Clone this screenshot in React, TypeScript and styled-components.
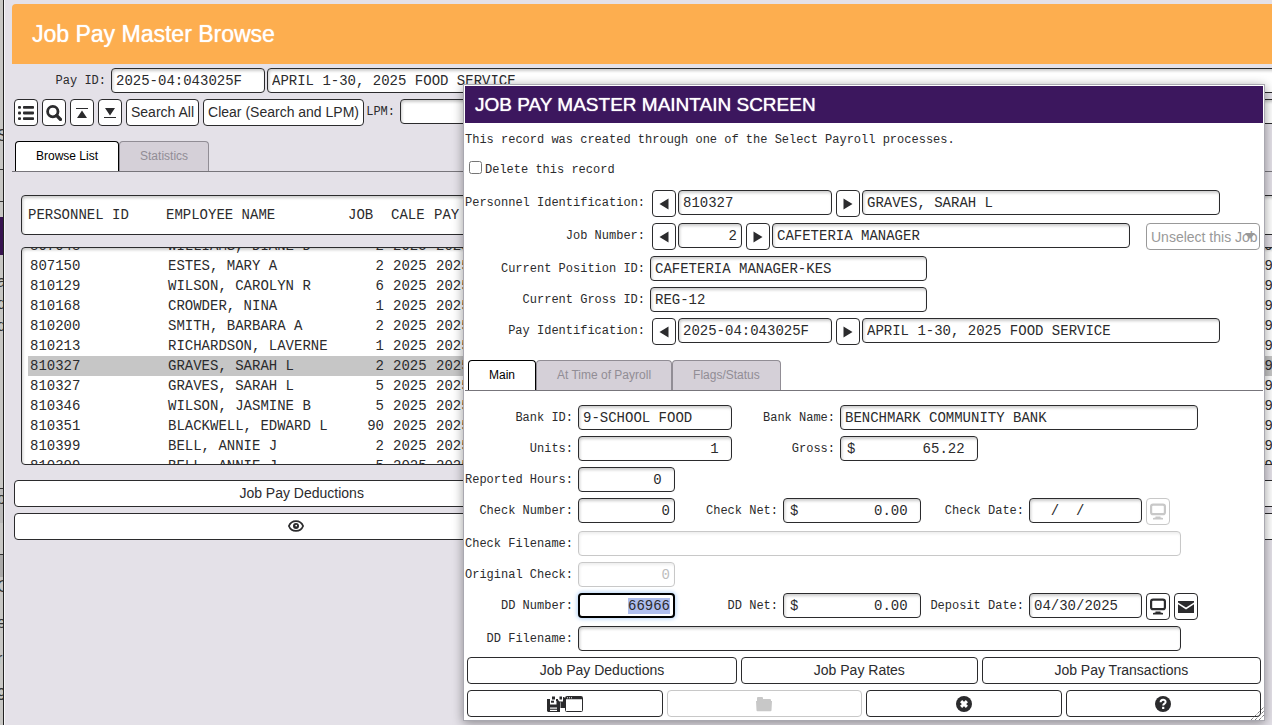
import React, { useEffect, useLayoutEffect, useRef } from 'react';
import styled, { createGlobalStyle, css } from 'styled-components';

const SANS = '"Liberation Sans", Arial, sans-serif';
const MONO = '"Liberation Mono", "Courier New", monospace';
const INK = '#2b2b2d';

const GlobalStyle = createGlobalStyle`
  *, *::before, *::after { box-sizing: border-box; }
  body { margin: 0; background: #e4e1e8; color: ${INK}; font-family: ${SANS}; overflow: hidden; }
  button, input, select { margin: 0; color: inherit; }
`;

/* ---------- page ---------- */

const Screen = styled.div`
  position: relative;
  display: flex;
  height: 100vh;
  overflow: hidden;
`;

const Underlay = styled.div`
  flex: none;
  width: 4px;
  overflow: hidden;
  background: #c8c7c4;
  border-right: 1px solid #222;
  font: 16px/20px ${SANS};
  color: #333;
`;

const Sliver = styled.div<{ $h: number; $tone?: string; $rule?: boolean }>`
  height: ${p => p.$h}px;
  overflow: hidden;
  text-indent: -3px;
  background: ${p => p.$tone || 'transparent'};
  border-bottom: ${p => (p.$rule ? '1px solid #333' : '0')};
`;

const Browse = styled.main`
  flex: none;
  width: calc(100% + 460px);
  background: #e4e1e8;
  border-left: 1px solid #f6f5f8;
  padding: 4px 8px 0 7px;
`;

const BrowseTitle = styled.h1`
  margin: 0;
  padding-left: 20px;
  height: 60px;
  border-radius: 4px 0 0 0;
  background: #fdae4f;
  color: #fff;
  font: 23px/60px ${SANS};
  text-shadow: 0 0 1px #fff;
`;

/* ---------- shared form parts ---------- */

const Row = styled.div<{ $top?: number }>`
  display: flex;
  align-items: flex-start;
  margin-top: ${p => p.$top ?? 6}px;
`;

const Label = styled.label<{ $w?: number }>`
  flex: none;
  width: ${p => (p.$w ? `${p.$w}px` : 'auto')};
  margin-right: 5px;
  padding-top: 1px;
  text-align: right;
  white-space: pre;
  font: 12px/24px ${MONO};
`;

const Field = styled.input<{ $w: number; $right?: boolean }>`
  flex: none;
  width: ${p => p.$w}px;
  height: 25px;
  margin-right: 2px;
  padding: 0 4px;
  border: 1px solid ${INK};
  border-radius: 4px;
  outline: 0;
  background: #fff;
  box-shadow: inset 1px 2px 3px rgba(0, 0, 0, 0.2);
  font: 14px/20px ${MONO};
  text-align: ${p => (p.$right ? 'right' : 'left')};

  &:disabled { border-color: #c8c8c8; color: #bdbdbd; box-shadow: inset 1px 2px 3px rgba(0, 0, 0, 0.07); }
  &:focus {
    border: 2px solid #000;
    padding: 0 3px;
    box-shadow: 0 0 4px 1px #b4d3f7;
  }
  &::selection { background: #afbeee; color: ${INK}; }
`;

const Button = styled.button<{ $icon?: boolean; $grow?: boolean; $even?: boolean }>`
  display: flex;
  align-items: center;
  justify-content: center;
  height: 27px;
  margin: 0 2px;
  padding: 0 4px 2px;
  border: 1px solid ${INK};
  border-radius: 4px;
  background: #fff;
  font: 14px/20px ${SANS};
  white-space: nowrap;
  flex: none;
  ${p => p.$icon && css`width: 24px; padding: 0;`}
  ${p => p.$grow && css`flex: 1 1 auto;`}
  ${p => p.$even && css`flex: 1 1 0; padding: 0;`}
  &:disabled { border-color: #c8c8c8; color: #c8c8c8; }
  svg { display: block; flex: none; }
`;

const Spacer = styled.span`
  flex: none;
  width: 12px;
`;

const TabBar = styled.div<{ $inset: number; $top: number }>`
  display: flex;
  margin-top: ${p => p.$top}px;
  padding-left: ${p => p.$inset}px;
  border-bottom: 1px solid #77757b;
`;

const Tab = styled.button<{ $on?: boolean }>`
  height: 30px;
  padding: 0 20px 2px;
  border: 1px solid ${p => (p.$on ? '#000' : '#918d95')};
  border-bottom: 0;
  border-radius: 4px 4px 0 0;
  background: ${p => (p.$on ? '#fff' : '#d5d0d8')};
  color: ${p => (p.$on ? '#000' : '#918d95')};
  font: 12px/20px ${SANS};
`;

/* ---------- browse list ---------- */

const Panel = styled.section`
  padding: 23px 0 0 9px;
`;

const box = css`
  border: 1px solid ${INK};
  border-radius: 4px;
  background: #fff;
  box-shadow: inset 1px 2px 3px rgba(0, 0, 0, 0.2);
  font: 14px/20px ${MONO};
  overflow: hidden;
`;

const HeadBox = styled.div`
  ${box}
  height: 40px;
  padding: 9px 6px;
`;

const ListBox = styled.div`
  ${box}
  height: 218px;
  margin-top: 12px;
  padding: 0 6px;
`;

const Table = styled.table`
  width: 100%;
  table-layout: fixed;
  border-collapse: collapse;
  th, td { height: 20px; padding: 0; font-weight: 400; text-align: left; white-space: pre; }
  td { padding-left: 2px; }
  td:nth-child(3) { text-align: right; padding-right: 7px; }
  th:nth-child(3) { padding-left: 2px; }
`;

const Line = styled.tr<{ $on?: boolean }>`
  background: ${p => (p.$on ? '#c6c6c6' : 'transparent')};
`;

const Footer = styled.div`
  margin-top: 15px;
`;

const Wide = styled(Button)<{ $part: number }>`
  flex: ${p => p.$part} 1 0;
`;

/* ---------- maintenance window ---------- */

const Dialog = styled.section`
  position: absolute;
  top: 84px;
  left: 463px;
  right: 7px;
  padding: 1px;
  border: 1px solid #a9a8b0;
  background: #fff;
  box-shadow: 0 2px 10px rgba(0, 0, 0, 0.4);
`;

const DialogTitle = styled.h2`
  margin: 0;
  padding-left: 10px;
  height: 37px;
  background: #3c175e;
  color: #fff;
  font: 19px/37px ${SANS};
  text-shadow: 0 0 1px #fff;
`;

const Note = styled.p`
  margin: 5px 0 0;
  font: 12px/24px ${MONO};
`;

const Check = styled.label`
  display: flex;
  align-items: flex-start;
  margin-top: 8px;
  height: 20px;
  padding-left: 4px;
  font: 12px/20px ${MONO};
  input { width: 13px; height: 13px; margin: 1px 3px 0 0; }
`;

const Picker = styled.span`
  position: relative;
  flex: none;
  width: 114px;
  margin: 0 2px;
  color: #999;
  select {
    appearance: none;
    display: block;
    width: 100%;
    height: 27px;
    padding: 0 0 0 4px;
    border: 1px solid #999;
    border-radius: 4px;
    background: #fff;
    font: 14px/20px ${SANS};
    opacity: 1;
    color: #999;
  }
  svg { position: absolute; right: 5px; top: 10px; }
`;

const Body = styled.div`
  padding: 9px 0 2px;
`;

const Grip = styled.svg`
  position: absolute;
  right: 0;
  bottom: 0;
`;

/* ---------- icons ---------- */

const ListIcon = () => (
  <svg width="16" height="16" viewBox="0 0 16 16" fill="currentColor">
    {[1, 6.6, 12.2].map(y => (
      <g key={y}>
        <rect x="0" y={y} width="3" height="2.8" rx="1" />
        <rect x="5" y={y} width="11" height="2.8" rx="0.8" />
      </g>
    ))}
  </svg>
);
const SearchIcon = () => (
  <svg width="16" height="16" viewBox="0 0 16 16" fill="none" stroke="currentColor">
    <circle cx="6.8" cy="6.6" r="5.2" strokeWidth="2.8" />
    <path d="M10.8 10.6l3.6 3.8" strokeWidth="3.4" strokeLinecap="round" />
  </svg>
);
const TopIcon = () => (
  <svg width="12" height="13" viewBox="0 0 12 13" fill="currentColor">
    <path d="M0 2h12v1H0zM6 4.500l5 7.500H1z" />
  </svg>
);
const BottomIcon = () => (
  <svg width="12" height="13" viewBox="0 0 12 13" fill="currentColor">
    <path d="M0 11h12v1H0zM1 2h10L6 9.500z" />
  </svg>
);
const PrevIcon = () => (
  <svg width="10" height="12" viewBox="0 0 10 12" fill="currentColor"><path d="M9.5 0.5v11L0.5 6z" /></svg>
);
const NextIcon = () => (
  <svg width="10" height="12" viewBox="0 0 10 12" fill="currentColor"><path d="M0.5 0.5v11L9.5 6z" /></svg>
);
const EyeIcon = () => (
  <svg width="16" height="12" viewBox="0 0 16 12">
    <path d="M0.9 6C3.500 -0.600 12.500 -0.600 15.100 6C12.500 12.600 3.500 12.600 0.900 6z" fill="none" stroke="currentColor" strokeWidth="1.800" />
    <circle cx="8" cy="6" r="3" fill="currentColor" />
    <circle cx="8.200" cy="5.600" r="0.900" fill="#fff" />
  </svg>
);
const MonitorIcon = () => (
  <svg width="16" height="17" viewBox="0 0 16 17" fill="currentColor">
    <rect x="1.100" y="1.600" width="13.800" height="9.600" rx="2" fill="none" stroke="currentColor" strokeWidth="2.200" />
    <path d="M5.500 13.500h5v1l2.500 .500v1.500H3v-1.500l2.500-.500z" />
  </svg>
);
const MailIcon = () => (
  <svg width="16" height="12" viewBox="0 0 16 12" fill="currentColor">
    <path d="M0 0h16v1.600L8 6.600L0 1.600zM0 3.200l8 5.200l8-5.200V12H0z" />
  </svg>
);
const SaveCloseIcon = () => (
  <svg width="36" height="16" viewBox="0 0 36 16">
    <path d="M9 3h2v2.500h5V1h1l1 1V12H13.500V6.500L12 5H9z" fill={INK} />
    <rect x="12.500" y="0.500" width="2.500" height="3" fill={INK} />
    <path d="M0 3h3v5.500H9.500V4H11L13 6V16H1L0 15z" fill={INK} />
    <rect x="3" y="11.500" width="7" height="3.500" fill="#fff" />
    <rect x="3" y="12.700" width="7" height="1.100" fill={INK} />
    <rect x="5" y="0.500" width="3" height="3" fill={INK} />
    <rect x="4" y="4.700" width="3" height="2" fill={INK} />
    <rect x="18.500" y="0.500" width="17" height="15" rx="1" fill="#fff" stroke={INK} />
    <path d="M19 2h16" stroke={INK} strokeWidth="2.500" />
    <path d="M20 1.800h1m1 0h1m1 0h1" stroke="#fff" strokeWidth="1" />
  </svg>
);
const FolderIcon = () => (
  <svg width="16" height="16" viewBox="0 0 16 16" fill="currentColor">
    <path d="M1 2q0-1 1-1h4q1 0 1 1v1h7q1 0 1 1v1.500H1zM0 5h16l-.500 9.300q0 1-1 1h-13q-1 0-1-1z" />
  </svg>
);
const CancelIcon = () => (
  <svg width="16" height="16" viewBox="0 0 16 16">
    <circle cx="8" cy="8" r="8" fill="currentColor" />
    <path d="M5.100 5.100l5.800 5.800M10.900 5.100l-5.800 5.800" stroke="#fff" strokeWidth="3" />
  </svg>
);
const HelpIcon = () => (
  <svg width="16" height="16" viewBox="0 0 16 16">
    <circle cx="8" cy="8" r="8" fill="currentColor" />
    <path d="M5.600 6.200C5.600 2.800 10.600 3 10.600 5.900C10.600 7.700 8.200 7.600 8.200 9.600" fill="none" stroke="#fff" strokeWidth="2" />
    <rect x="7.100" y="10.800" width="2.200" height="2.200" fill="#fff" />
  </svg>
);

/* ---------- data ---------- */

const records: [string, string, string][] = [
  ['807048', 'WILLIAMS, DIANE D', '2'],
  ['807150', 'ESTES, MARY A', '2'],
  ['810129', 'WILSON, CAROLYN R', '6'],
  ['810168', 'CROWDER, NINA', '1'],
  ['810200', 'SMITH, BARBARA A', '2'],
  ['810213', 'RICHARDSON, LAVERNE', '1'],
  ['810327', 'GRAVES, SARAH L', '2'],
  ['810327', 'GRAVES, SARAH L', '5'],
  ['810346', 'WILSON, JASMINE B', '5'],
  ['810351', 'BLACKWELL, EDWARD L', '90'],
  ['810399', 'BELL, ANNIE J', '2'],
  ['810399', 'BELL, ANNIE J', '5'],
];
const SELECTED = 6;

const Col = styled.col<{ $w: number }>`
  width: ${p => p.$w}px;
`;

const Columns = () => (
  <colgroup>
    <Col $w={138} />
    <Col $w={180} />
    <Col $w={45} />
    <Col $w={43} />
    <Col $w={820} />
    <col />
  </colgroup>
);

function RecordList() {
  const list = useRef<HTMLDivElement>(null);
  useLayoutEffect(() => {
    if (list.current) list.current.scrollTop = 12;
  }, []);
  return (
    <Panel>
      <HeadBox>
        <Table>
          <Columns />
          <thead>
            <tr>
              <th>PERSONNEL ID</th><th>EMPLOYEE NAME</th><th>JOB</th><th>CALE</th><th>PAY</th><th />
            </tr>
          </thead>
        </Table>
      </HeadBox>
      <ListBox ref={list}>
        <Table>
          <Columns />
          <tbody>
            {records.map(([id, name, job], i) => (
              <Line key={i} $on={i === SELECTED}>
                <td>{id}</td><td>{name}</td><td>{job}</td><td>2025</td><td>2025</td><td>69</td>
              </Line>
            ))}
          </tbody>
        </Table>
      </ListBox>
    </Panel>
  );
}

type EntryProps = { id: string; label: string; lw: number; w: number; value: string; right?: boolean; disabled?: boolean };
const Entry = ({ id, label, lw, w, value, right, disabled }: EntryProps) => (
  <>
    <Label htmlFor={id} $w={lw}>{label}</Label>
    <Field id={id} $w={w} $right={right} disabled={disabled} defaultValue={value} />
  </>
);

function MaintainDialog() {
  const dd = useRef<HTMLInputElement>(null);
  useEffect(() => {
    dd.current?.focus();
    dd.current?.select();
  }, []);
  return (
    <Dialog role="dialog" aria-labelledby="dialog-title">
      <DialogTitle id="dialog-title">JOB PAY MASTER MAINTAIN SCREEN</DialogTitle>
      <Note>This record was created through one of the Select Payroll processes.</Note>
      <Check><input type="checkbox" />Delete this record</Check>

      <Row $top={10}>
        <Label htmlFor="person" $w={180}>Personnel Identification:</Label>
        <Button $icon aria-label="Previous person"><PrevIcon /></Button>
        <Field id="person" $w={154} defaultValue="810327" />
        <Button $icon aria-label="Next person"><NextIcon /></Button>
        <Field $w={358} aria-label="Person name" defaultValue="GRAVES, SARAH L" />
      </Row>
      <Row>
        <Label htmlFor="job" $w={180}>Job Number:</Label>
        <Button $icon aria-label="Previous job"><PrevIcon /></Button>
        <Field id="job" $w={64} $right defaultValue="2" />
        <Button $icon aria-label="Next job"><NextIcon /></Button>
        <Field $w={358} aria-label="Job name" defaultValue="CAFETERIA MANAGER" />
        <Spacer />
        <Picker>
          <select disabled aria-label="Job selection"><option>Unselect this Job</option></select>
          <svg width="10" height="6" viewBox="0 0 10 6" fill="currentColor"><path d="M0 0h10L5 6z" /></svg>
        </Picker>
      </Row>
      <Row><Entry id="position" label="Current Position ID:" lw={180} w={277} value="CAFETERIA MANAGER-KES" /></Row>
      <Row><Entry id="grossid" label="Current Gross ID:" lw={180} w={277} value="REG-12" /></Row>
      <Row>
        <Label htmlFor="pay" $w={180}>Pay Identification:</Label>
        <Button $icon aria-label="Previous pay"><PrevIcon /></Button>
        <Field id="pay" $w={154} defaultValue="2025-04:043025F" />
        <Button $icon aria-label="Next pay"><NextIcon /></Button>
        <Field $w={358} aria-label="Pay name" defaultValue="APRIL 1-30, 2025 FOOD SERVICE" />
      </Row>

      <TabBar $inset={3} $top={15} role="tablist">
        <Tab $on role="tab" aria-selected>Main</Tab>
        <Tab role="tab">At Time of Payroll</Tab>
        <Tab role="tab">Flags/Status</Tab>
      </TabBar>

      <Body>
        <Row $top={5}>
          <Entry id="bank" label="Bank ID:" lw={108} w={154} value="9-SCHOOL FOOD" />
          <Entry id="bankname" label="Bank Name:" lw={101} w={358} value="BENCHMARK COMMUNITY BANK" />
        </Row>
        <Row>
          <Entry id="units" label="Units:" lw={108} w={154} value="1 " right />
          <Entry id="gross" label="Gross:" lw={101} w={138} value="$        65.22 " right />
        </Row>
        <Row><Entry id="hours" label="Reported Hours:" lw={108} w={97} value="0 " right /></Row>
        <Row>
          <Entry id="checkno" label="Check Number:" lw={108} w={97} value="0" right />
          <Entry id="checknet" label="Check Net:" lw={101} w={138} value="$         0.00 " right />
          <Entry id="checkdate" label="Check Date:" lw={101} w={113} value="  /  /" />
          <Button $icon disabled aria-label="View check"><MonitorIcon /></Button>
        </Row>
        <Row><Entry id="checkfile" label="Check Filename:" lw={108} w={603} value="" disabled /></Row>
        <Row><Entry id="original" label="Original Check:" lw={108} w={97} value="0" right disabled /></Row>
        <Row>
          <Label htmlFor="dd" $w={108}>DD Number:</Label>
          <Field ref={dd} id="dd" $w={97} $right defaultValue="66966" />
          <Entry id="ddnet" label="DD Net:" lw={101} w={138} value="$         0.00 " right />
          <Entry id="dddate" label="Deposit Date:" lw={101} w={113} value="04/30/2025" />
          <Button $icon aria-label="View deposit"><MonitorIcon /></Button>
          <Button $icon aria-label="Mail deposit"><MailIcon /></Button>
        </Row>
        <Row><Entry id="ddfile" label="DD Filename:" lw={108} w={603} value="" /></Row>
        <Row>
          <Button $grow>Job Pay Deductions</Button>
          <Button $grow>Job Pay Rates</Button>
          <Button $grow>Job Pay Transactions</Button>
        </Row>
        <Row>
          <Button $even aria-label="Save and close"><SaveCloseIcon /></Button>
          <Button $even disabled aria-label="Open folder"><FolderIcon /></Button>
          <Button $even aria-label="Cancel"><CancelIcon /></Button>
          <Button $even aria-label="Help"><HelpIcon /></Button>
        </Row>
      </Body>
      <Grip width="13" height="13" viewBox="0 0 13 13" stroke="#444" strokeDasharray="1 1">
        <path d="M0 13L13 0M4 13L13 4M8 13L13 8" />
      </Grip>
    </Dialog>
  );
}

export default function App() {
  return (
    <>
      <GlobalStyle />
      <Screen>
        <Underlay aria-hidden="true">
          <Sliver $h={126} />
          <Sliver $h={44} $rule>S</Sliver>
          <Sliver $h={32} $rule />
          <Sliver $h={15} />
          <Sliver $h={38} $tone="#371350" />
          <Sliver $h={17} />
          <Sliver $h={22}>a</Sliver>
          <Sliver $h={22}>d</Sliver>
          <Sliver $h={173} $rule>d</Sliver>
          <Sliver $h={34} $tone="#bab9b8">o</Sliver>
          <Sliver $h={32} $rule />
          <Sliver $h={22} $tone="#aaa9a8" />
          <Sliver $h={36}>C</Sliver>
          <Sliver $h={36}>e</Sliver>
          <Sliver $h={36}>r</Sliver>
          <Sliver $h={36}>9</Sliver>
        </Underlay>
        <Browse>
          <BrowseTitle>Job Pay Master Browse</BrowseTitle>
          <Row $top={4}>
            <Entry id="payid" label="Pay ID:" lw={94} w={154} value="2025-04:043025F" />
            <Field $w={1440} aria-label="Pay description" defaultValue="APRIL 1-30, 2025 FOOD SERVICE" />
          </Row>
          <Row>
            <Button $icon aria-label="List"><ListIcon /></Button>
            <Button $icon aria-label="Search"><SearchIcon /></Button>
            <Button $icon aria-label="First"><TopIcon /></Button>
            <Button $icon aria-label="Last"><BottomIcon /></Button>
            <Button>Search All</Button>
            <Button>Clear (Search and LPM)</Button>
            <Entry id="lpm" label="LPM:" lw={29} w={1300} value="" />
          </Row>
          <TabBar $inset={3} $top={15} role="tablist">
            <Tab $on role="tab" aria-selected>Browse List</Tab>
            <Tab role="tab">Statistics</Tab>
          </TabBar>
          <RecordList />
          <Footer>
            <Row>
              <Wide $part={143}>Job Pay Deductions</Wide>
              <Wide $part={284} aria-label="More" />
            </Row>
            <Row>
              <Wide $part={140} aria-label="View"><EyeIcon /></Wide>
              <Wide $part={287} aria-label="More" />
            </Row>
          </Footer>
        </Browse>
        <MaintainDialog />
      </Screen>
    </>
  );
}
